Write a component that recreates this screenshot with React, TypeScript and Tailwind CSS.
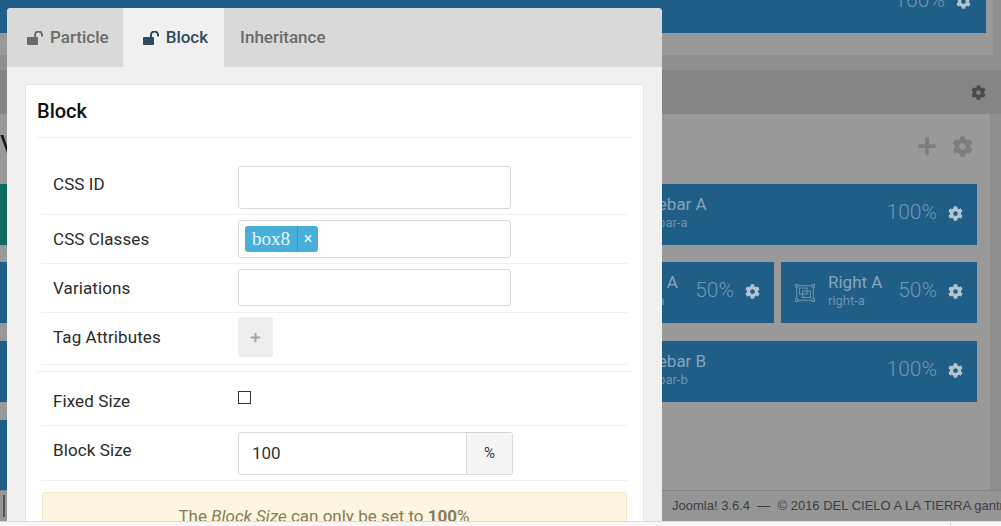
import type { ReactNode } from 'react';
import { FaCog, FaPlus } from 'react-icons/fa';

function UnlockIcon() {
  return (
    <svg className="w-[17px] h-[14px] shrink-0" viewBox="0 0 17 14" fill="none">
      <rect x="0" y="6" width="11" height="8" rx="0.8" fill="currentColor" />
      <path d="M8 6.5V4a3.5 3.5 0 0 1 7 0v1.5" stroke="currentColor" strokeWidth="2" />
    </svg>
  );
}

function ObjectGroupIcon() {
  return (
    <svg className="w-[20px] h-[18px] shrink-0 text-[#6f93aa]" viewBox="0 0 20 18" fill="none" stroke="currentColor" strokeWidth="1">
      <rect x="0.5" y="0.5" width="2.5" height="2.5" />
      <rect x="17" y="0.5" width="2.5" height="2.5" />
      <rect x="0.5" y="15" width="2.5" height="2.5" />
      <rect x="17" y="15" width="2.5" height="2.5" />
      <path d="M3 1.7h14M3 16.3h14M1.7 3v12M18.3 3v12" />
      <rect x="4.5" y="4" width="7.5" height="6" />
      <rect x="7.5" y="7" width="8" height="6.5" />
    </svg>
  );
}

function BlockSize({ size }: { size: string }) {
  return (
    <>
      <span className="mb-[3px] text-[21px] font-light text-[#6f98b3]">{size}</span>
      <FaCog className="ml-[11px] mb-[3px] w-[15px] h-[15px] text-[#b4c4cf]" />
    </>
  );
}

interface BlockProps {
  title: string;
  sub: string;
  size: string;
  className?: string;
}

function Block({ title, sub, size, className = '' }: BlockProps) {
  return (
    <div className={`flex h-[61px] items-center bg-[#1f5e87] pl-[14px] pr-[14px] ${className}`}>
      <ObjectGroupIcon />
      <div className="ml-[13px] mb-[4px] flex-1 whitespace-nowrap">
        <div className="text-[17px] leading-[20px] text-[#86a5b9]">{title}</div>
        <div className="text-[13px] leading-[17px] text-[#6a93ad]">{sub}</div>
      </div>
      <BlockSize size={size} />
    </div>
  );
}

interface RowProps {
  label: string;
  className: string;
  labelClass: string;
  children: ReactNode;
}

function Row({ label, className, labelClass, children }: RowProps) {
  return (
    <div className={`flex border-b border-[#f0f0f0] ${className}`}>
      <div className={`w-[197px] shrink-0 pl-[12px] text-[17px] leading-[24px] tracking-[0.1px] text-[#2b2b2b] ${labelClass}`}>
        {label}
      </div>
      {children}
    </div>
  );
}

function Tab({ label, className, active, icon }: { label: string; className: string; active?: boolean; icon?: boolean }) {
  return (
    <div
      className={`flex items-center gap-[6px] text-[17px] font-medium ${
        active ? 'bg-[#f0f0f0] text-[#2f4a5f]' : 'text-[#6b6b6b]'
      } ${className}`}
    >
      {icon && <UnlockIcon />}
      {label}
    </div>
  );
}

export default function App() {
  return (
    <div className="flex h-[526px] flex-col overflow-hidden bg-[#f7f7f7] font-['Roboto',sans-serif]">
      <div className="relative h-[521px] shrink-0 overflow-hidden bg-[#8f8f8f]">
        {/* page behind the modal */}
        <div className="mr-[8px] flex h-[55px] flex-col bg-[#999999]">
          <div className="-mt-[28px] mr-[7px] flex h-[61px] shrink-0 items-center justify-end bg-[#1f5e87] pr-[15px]">
            <BlockSize size="100%" />
          </div>
        </div>
        <div className="h-[15px]" />
        <div className="flex h-[44px] items-center justify-end bg-[#858585] pr-[15px]">
          <FaCog className="w-[15px] h-[15px] text-[#4a4a4a]" />
        </div>
        <div className="mr-[11px] h-[376px] bg-[#999999] pr-[13px]">
          <div className="flex h-[70px] items-center justify-between pb-[6px] pr-[4px]">
            <span className="text-[28px] leading-[32px] text-[#111111]">V</span>
            <div className="flex items-center gap-[15px]">
              <FaPlus className="w-[20px] h-[20px] text-[#7d7d7d]" />
              <FaCog className="w-[21px] h-[21px] text-[#7d7d7d]" />
            </div>
          </div>
          <div className="flex gap-[7px]">
            <div className="flex w-[571px] shrink-0 flex-col">
              <div className="mb-[17px] h-[61px] bg-[#0f6b5c]" />
              <div className="mb-[18px] h-[61px] bg-[#1f5e87]" />
              <div className="mb-[18px] h-[61px] bg-[#1f5e87]" />
              <div className="h-[70px] bg-[#1f5e87]" />
            </div>
            <div className="flex flex-1 flex-col">
              <Block title="Sidebar A" sub="sidebar-a" size="100%" className="mb-[17px] pl-[23px]" />
              <div className="mb-[18px] flex gap-[7px]">
                <Block title="Main A" sub="main-a" size="50%" className="flex-1" />
                <Block title="Right A" sub="right-a" size="50%" className="flex-1" />
              </div>
              <Block title="Sidebar B" sub="sidebar-b" size="100%" className="pl-[23px]" />
            </div>
          </div>
        </div>
        <div className="flex h-[31px] items-center border-t border-[#858585] bg-[#959595] font-['Liberation_Sans',sans-serif] text-[13px] text-[#3f3f3f]">
          <div className="w-[672px] shrink-0 pl-[3px]">
            <div className="h-[22px] w-[2px] bg-[#555555]" />
          </div>
          <span className="whitespace-nowrap">Joomla! 3.6.4 &nbsp;—&nbsp; © 2016 DEL CIELO A LA TIERRA gantry</span>
        </div>

        {/* modal */}
        <div className="absolute left-[7px] top-[8px] bottom-0 w-[655px] overflow-hidden rounded-t-[4px] bg-[#f0f0f0]">
          <div className="flex h-[59px] bg-[#d9d9d9]">
            <Tab label="Particle" icon className="pl-[20px] pr-[14px]" />
            <Tab label="Block" icon active className="pl-[20px] pr-[16px]" />
            <Tab label="Inheritance" className="pl-[16px]" />
          </div>
          <div className="mx-[18px] mt-[17px] h-[500px] rounded-t-[3px] border border-[#e4e4e4] bg-white">
            <div className="mx-[11px] flex h-[53px] items-center border-b border-[#eeeeee] text-[20px] font-medium text-[#111111]">
              Block
            </div>
            <div className="mx-[15px] mr-[16px]">
              <Row label="CSS ID" className="h-[77px] pt-[28px]" labelClass="mt-[6px]">
                <div className="h-[43px] w-[273px] rounded-[3px] border border-[#d8d8d8]" />
              </Row>
              <Row label="CSS Classes" className="h-[49px] pt-[5px]" labelClass="mt-[7px]">
                <div className="flex h-[38px] w-[273px] items-center rounded-[3px] border border-[#d8d8d8] pl-[6px]">
                  <div className="flex h-[26px] items-center rounded-[3px] bg-[#48afd8] text-[#e8f6fb]">
                    <span className="w-[53px] border-r border-[#3a9cc4] text-center font-['Liberation_Serif',serif] text-[19px] leading-[26px]">
                      box8
                    </span>
                    <span className="w-[20px] text-center text-[16px] leading-[26px]">×</span>
                  </div>
                </div>
              </Row>
              <Row label="Variations" className="h-[49px] pt-[5px]" labelClass="mt-[7px]">
                <div className="h-[37px] w-[273px] rounded-[3px] border border-[#d8d8d8]" />
              </Row>
              <Row label="Tag Attributes" className="h-[52px] pt-[4px]" labelClass="mt-[8px]">
                <div className="flex h-[40px] w-[35px] items-center justify-center rounded-[3px] bg-[#eeeeee]">
                  <FaPlus className="w-[11px] h-[11px] text-[#a5a5a5]" />
                </div>
              </Row>
            </div>
            <div className="mx-[11px] mt-[6px] border-t border-[#f0f0f0]" />
            <div className="mx-[15px] mr-[16px]">
              <Row label="Fixed Size" className="h-[54px] pt-[17px]" labelClass="">
                <div className="mt-[2px] h-[13px] w-[13px] border border-[#333333]" />
              </Row>
              <Row label="Block Size" className="h-[55px] pt-[6px]" labelClass="mt-[6px]">
                <div className="flex h-[43px] w-[275px] rounded-[3px] border border-[#d8d8d8]">
                  <div className="flex w-[227px] items-center pl-[13px] text-[17px] text-[#333333]">100</div>
                  <div className="flex flex-1 items-center justify-center border-l border-[#d8d8d8] bg-[#f5f5f5] text-[15px] text-[#333333]">
                    %
                  </div>
                </div>
              </Row>
            </div>
            <div className="mx-[16px] mt-[11px] h-[60px] rounded-[3px] border border-[#f3e8c4] bg-[#fcf6e0] pt-[13px] pr-[21px] text-center text-[17px] leading-[20px] text-[#8a7a55]">
              The <em>Block Size</em> can only be set to <strong>100</strong>%
            </div>
          </div>
        </div>
      </div>
      <div className="flex h-[5px] justify-end border-t border-[#dddddd] pr-[50px]">
        <div className="w-px bg-[#dddddd]" />
      </div>
    </div>
  );
}
